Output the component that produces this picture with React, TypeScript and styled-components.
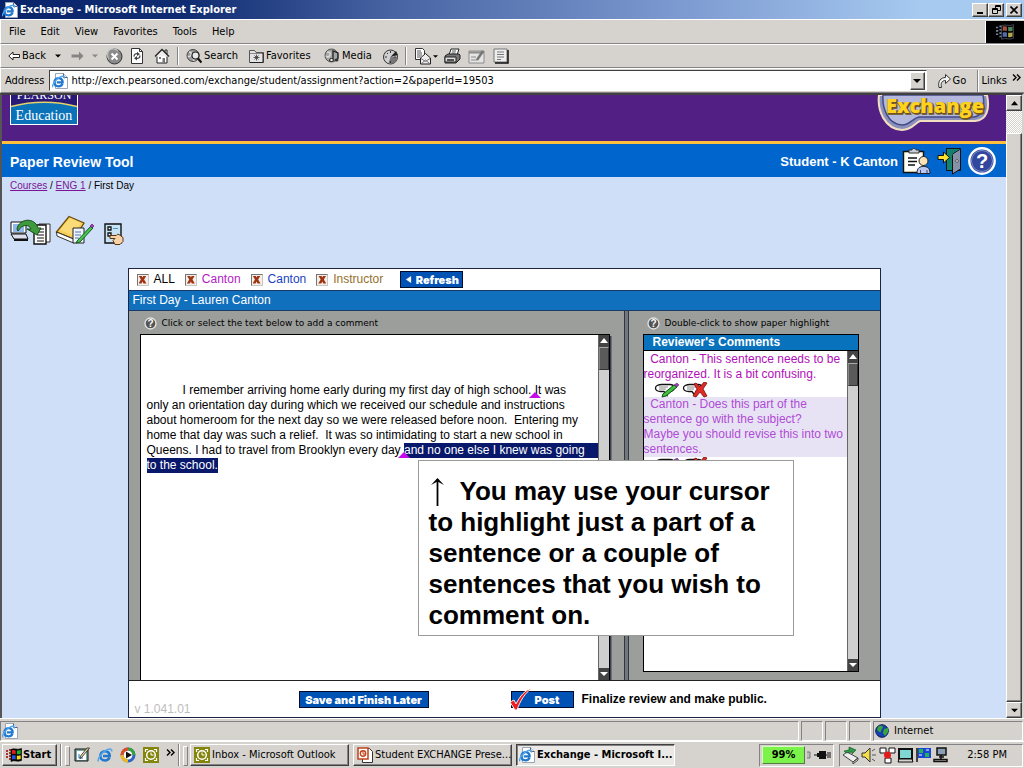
import React from "react";
import styled, { createGlobalStyle, css } from "styled-components";

const ui = `"DejaVu Sans Condensed", "DejaVu Sans", sans-serif`;
const arial = `"Liberation Sans", Arial, sans-serif`;
const face = "#d6d3ce";

const Global = createGlobalStyle`
  * { box-sizing: border-box; }
  body { margin: 0; background: ${face}; font: 11px/14px ${ui}; color: #000; }
  button, input { font: inherit; color: inherit; margin: 0; padding: 0; border: 0; background: none; }
  svg { display: block; flex: none; }
`;

const raised = css`
  background: ${face};
  border: 1px solid;
  border-color: #fff #404040 #404040 #fff;
  box-shadow: inset -1px -1px #848284;
`;
const sunken = css`
  border: 1px solid;
  border-color: #848284 #fff #fff #848284;
`;

const Desktop = styled.div`
  display: flex;
  flex-direction: column;
  min-height: 100vh;
`;

/* ---------- browser chrome ---------- */
const TitleBar = styled.header`
  display: flex;
  align-items: center;
  height: 19px;
  padding: 0 2px;
  gap: 2px;
  background: linear-gradient(90deg, #0a246a 0%, #0f2c72 18%, #4763a2 38%, #7c99d0 66%, #a6caf0 90%);
`;
const WindowTitle = styled.h1`
  flex: 1;
  margin: 0;
  font: bold 11px/18px ${ui};
  color: #fff;
`;
const WindowButtons = styled.div`
  display: flex;
`;
const WindowButton = styled.button<{ $apart?: boolean }>`
  ${raised}
  display: grid;
  place-items: center;
  width: 16px;
  height: 14px;
  margin-left: ${(p) => (p.$apart ? "2px" : "0")};
`;
const Bar = styled.div<{ $h: number }>`
  display: flex;
  align-items: center;
  height: ${(p) => p.$h}px;
  border-top: 1px solid #fff;
  border-bottom: 1px solid #848284;
  border-left: 1px solid #fff;
`;
const MenuBar = styled(Bar).attrs({ as: "nav" })`
  padding-left: 8px;
`;
const MenuItems = styled.div`
  flex: 1;
  display: flex;
  gap: 15px;
`;
const Throbber = styled.div`
  display: grid;
  place-items: center;
  width: 39px;
  height: 22px;
  background: #000;
  border-left: 1px solid #fff;
`;
const Tools = styled(Bar)`
  padding-left: 7px;
`;
const ToolButton = styled.button<{ $w: number }>`
  display: flex;
  align-items: center;
  gap: 2px;
  width: ${(p) => p.$w}px;
  height: 20px;
  white-space: nowrap;
`;
const Divider = styled.span`
  width: 2px;
  height: 18px;
  margin-right: 7px;
  border-left: 1px solid #848284;
  border-right: 1px solid #fff;
`;
const AddressBar = styled(Bar)`
  padding: 0 3px 0 4px;
  gap: 5px;
`;
const AddressField = styled.div`
  flex: 1;
  display: flex;
  align-items: center;
  height: 21px;
  padding: 0 1px 0 2px;
  gap: 3px;
  background: #fff;
  border: 1px solid;
  border-color: #404040 #fff #fff #404040;
`;
const AddressInput = styled.input`
  flex: 1;
  min-width: 0;
  outline: 0;
`;
const DropButton = styled.button`
  ${raised}
  display: grid;
  place-items: center;
  width: 15px;
  height: 18px;
`;
const GoButton = styled.button`
  display: flex;
  align-items: center;
  gap: 2px;
  width: 40px;
  padding-left: 6px;
`;
const LinksButton = styled.button`
  display: flex;
  height: 22px;
  align-items: center;
  gap: 5px;
  padding-left: 4px;
  border-left: 1px solid #848284;
  box-shadow: inset 1px 0 #fff;
`;

/* ---------- page ---------- */
const Viewport = styled.div`
  flex: 1;
  display: flex;
  border-top: 2px solid #404040;
  border-left: 2px solid #555;
  border-right: 2px solid ${face};
`;
const Page = styled.main`
  flex: 1;
  min-width: 0;
  display: flex;
  flex-direction: column;
  background: #cedff7;
`;
const Banner = styled.div`
  display: flex;
  justify-content: space-between;
  align-items: flex-start;
  height: 49px;
  padding: 0 16px 0 8px;
  background: #521f84;
  border-bottom: 3px solid #fdbf3c;
`;
const ToolHeader = styled.div`
  display: flex;
  align-items: center;
  height: 33px;
  padding: 0 10px 0 8px;
  background: #0066ce;
  color: #fff;
  font: bold 13px/18px ${arial};
`;
const ToolTitle = styled.h2`
  flex: 1;
  margin: 0;
  padding-top: 2px;
  font: bold 14px/18px ${arial};
`;
const UserName = styled.span`
  padding-top: 2px;
`;
const HeaderIcons = styled.div`
  display: flex;
  align-items: center;
  gap: 6px;
  margin-left: 4px;
`;
const IconButton = styled.button`
  display: block;
`;
const Crumbs = styled.nav`
  height: 38px;
  padding: 2px 8px;
  font: 10px/14px ${arial};
  a { color: #7b1694; }
`;
const PaperTools = styled.div`
  display: flex;
  align-items: flex-start;
  gap: 4px;
  height: 53px;
  padding: 0 8px;
`;

/* ---------- review panel ---------- */
const Panel = styled.section`
  position: relative;
  flex: 1;
  display: flex;
  flex-direction: column;
  width: 75%;
  min-width: 720px;
  min-height: 420px;
  margin: 0 auto;
  background: #fff;
  border: 1px solid #1c2440;
  font: 12px/15px ${arial};
`;
const FilterRow = styled.div`
  display: flex;
  align-items: center;
  height: 21px;
  padding-left: 8px;
`;
const FilterLabel = styled.label<{ $c: string }>`
  display: flex;
  align-items: center;
  gap: 5px;
  margin-right: 10px;
  color: ${(p) => p.$c};
`;
const FilterSubmit = styled.div`
  padding-left: 7px;
`;
const Tick = styled.input`
  appearance: none;
  display: grid;
  place-items: center;
  width: 12px;
  height: 12px;
  background: #f3efea;
  border: 1px solid;
  border-color: #77736f #c9c5c0 #c9c5c0 #77736f;
  &:checked::before {
    content: "";
    width: 8px;
    height: 8px;
    background: #a03412;
    clip-path: polygon(0 0, 38% 0, 50% 25%, 62% 0, 100% 0, 70% 50%, 100% 100%, 62% 100%, 50% 75%, 38% 100%, 0 100%, 30% 50%);
  }
`;
const BlueButton = styled.button<{ $w: number }>`
  display: flex;
  align-items: center;
  justify-content: center;
  gap: 4px;
  width: ${(p) => p.$w}px;
  height: 17px;
  background: #0053b5;
  border: 1px solid #000c2c;
  color: #fff;
  font: 900 11px/14px Inter, sans-serif;
`;
const DocTitle = styled.h3`
  height: 21px;
  margin: 0;
  padding: 0 4px;
  background: #1170bd;
  border: solid #1c3a63;
  border-width: 1px 0;
  color: #fff;
  font: 12px/19px ${arial};
`;
const Work = styled.div`
  flex: 1;
  display: flex;
  background: #9c9e9c;
`;
const PaperPane = styled.div`
  flex: 1;
  min-width: 0;
  display: flex;
  flex-direction: column;
  padding: 0 14px 0 11px;
`;
const Splitter = styled.div`
  width: 5px;
  background: #73767a;
  border: solid #2f3644;
  border-width: 0 1px;
`;
const CommentPane = styled.div`
  width: 251px;
  display: flex;
  flex-direction: column;
  padding: 0 21px 8px 14px;
`;
const Hint = styled.p`
  display: flex;
  align-items: center;
  gap: 5px;
  height: 23px;
  margin: 0;
  padding: 1px 0 0 4px;
  font: 9px/12px "DejaVu Sans", sans-serif;
  white-space: nowrap;
`;
const PaperBox = styled.div`
  flex: 1;
  display: flex;
  background: #fff;
  border: 1px solid #000;
  border-bottom: 0;
  box-shadow: 2px 2px #3a4258;
  clip-path: inset(0 -2px 0 0);
`;
const PaperText = styled.div`
  flex: 1;
  min-width: 0;
  padding: 48px 0 0 6px;
  white-space: pre;
`;
const Line = styled.div<{ $indent?: boolean }>`
  display: flex;
  height: 15px;
  padding-left: ${(p) => (p.$indent ? "36px" : "0")};
`;
const Marked = styled.mark<{ $fill?: boolean }>`
  flex: ${(p) => (p.$fill ? 1 : "none")};
  background: #08186b;
  color: #fff;
`;
const Anchor = styled.span`
  position: relative;
  &::after {
    content: "";
    position: absolute;
    left: -6px;
    top: 9px;
    border: 6px solid transparent;
    border-top: 0;
    border-bottom: 6px solid #c60ce8;
  }
`;
const SlimScroll = styled.div`
  display: flex;
  flex-direction: column;
  width: 11px;
  background: #cecfce;
  border-left: 1px solid #666;
`;
const SlimButton = styled.button`
  display: grid;
  place-items: center;
  height: 12px;
  background: #444;
`;
const SlimThumb = styled.div`
  height: 23px;
  background: #5a5a5a;
  border: 1px solid #333;
  border-top-color: #aaa;
  border-left-color: #888;
`;
const Fill = styled.div`
  flex: 1;
`;
const CommentBox = styled.div`
  flex: 1;
  display: flex;
  flex-direction: column;
  background: #fff;
  border: 1px solid #000;
`;
const CommentHead = styled.h4`
  height: 16px;
  margin: 0;
  padding-left: 9px;
  background: #0872bd;
  border-bottom: 1px solid #000;
  color: #fff;
  font: bold 12px/15px ${arial};
`;
const CommentBody = styled.div`
  flex: 1;
  display: flex;
`;
const CommentList = styled.div`
  flex: 1;
  padding-top: 1px;
  white-space: pre;
`;
const Comment = styled.p<{ $active?: boolean }>`
  margin: 0;
  color: ${(p) => (p.$active ? "#b04bd6" : "#b010b8")};
  background: ${(p) => (p.$active ? "#e7e3f5" : "transparent")};
`;
const CommentActions = styled.div`
  display: flex;
  gap: 2px;
  height: 15px;
  padding-left: 10px;
`;
const Footer = styled.footer`
  display: grid;
  grid-template-columns: 170px 212px 71px 1fr;
  height: 37px;
  padding-top: 10px;
  border-top: 1px solid #222;
`;
const Version = styled.span`
  padding: 11px 0 0 6px;
  color: #bdbdbd;
`;
const PostWrap = styled.div`
  position: relative;
  svg { position: absolute; left: -2px; top: -4px; }
  button { padding-left: 10px; }
`;
const Final = styled.strong`
  padding-top: 1px;
`;
const Callout = styled.aside`
  position: absolute;
  left: 289px;
  top: 191px;
  width: 376px;
  padding: 15px 10px 4px;
  background: #fff;
  border: 1px solid #9a9c9a;
  font: bold 26px/31px ${arial};
  white-space: pre;
  p { margin: 0; display: flex; align-items: center; gap: 14px; }
`;

/* ---------- page scroll bar ---------- */
const PageScroll = styled.div`
  display: flex;
  flex-direction: column;
  width: 16px;
  background: repeating-conic-gradient(#fff 0 25%, ${face} 0 50%) 0 0 / 2px 2px;
`;
const ScrollButton = styled.button`
  ${raised}
  display: grid;
  place-items: center;
  width: 16px;
  height: 16px;
`;
const Thumb = styled.div`
  ${raised}
  flex: 1;
  margin-top: 22px;
`;

/* ---------- status and task bars ---------- */
const StatusBar = styled.div`
  display: flex;
  align-items: center;
  gap: 2px;
  height: 23px;
  padding: 1px 1px 0 0;
  border-top: 1px solid #fff;
`;
const Cell = styled.div<{ $w?: number }>`
  ${sunken}
  flex: ${(p) => (p.$w ? "none" : "1")};
  width: ${(p) => (p.$w ? p.$w + "px" : "auto")};
  height: 20px;
  display: flex;
  align-items: center;
  gap: 5px;
  padding-left: 1px;
`;
const TaskBar = styled.div`
  display: flex;
  align-items: center;
  height: 27px;
  padding: 0 1px 0 2px;
  border-top: 1px solid #fff;
`;
const StartButton = styled.button`
  ${raised}
  display: flex;
  align-items: center;
  gap: 1px;
  width: 55px;
  height: 22px;
  padding-left: 3px;
  font-weight: bold;
`;
const Grip = styled.span<{ $ml?: number }>`
  width: 8px;
  height: 22px;
  margin-left: ${(p) => p.$ml || 0}px;
  border-left: 1px solid #848284;
  box-shadow: inset 1px 0 #fff;
  &::after {
    content: "";
    display: block;
    width: 3px;
    height: 18px;
    margin: 2px 0 0 4px;
    border: 1px solid;
    border-color: #fff #848284 #848284 #fff;
  }
`;
const Quick = styled.div`
  display: flex;
  align-items: center;
  gap: 7px;
  width: 110px;
  padding-left: 6px;
`;
const TaskButton = styled.button<{ $active?: boolean }>`
  ${raised}
  display: flex;
  align-items: center;
  gap: 2px;
  width: 159px;
  height: 22px;
  margin-left: 4px;
  padding-left: 3px;
  white-space: nowrap;
  ${(p) =>
    p.$active &&
    css`
      padding-left: 2px;
      font-weight: bold;
      background: #ebe9e6;
      border-color: #404040 #fff #fff #404040;
      box-shadow: inset 1px 1px #848284;
    `}
`;
const TaskLabel = styled.span`
  overflow: hidden;
  text-overflow: clip;
`;
const Tray = styled.div<{ $w: number }>`
  ${sunken}
  display: flex;
  align-items: center;
  gap: 2px;
  width: ${(p) => p.$w}px;
  height: 23px;
  margin-left: 5px;
  padding-left: 2px;
`;
const Battery = styled.div`
  width: 44px;
  height: 18px;
  background: #7bf34a;
  border: 1px solid;
  border-color: #d5ffbf #557a44 #557a44 #d5ffbf;
  font: bold 11px/15px ${ui};
  text-align: center;
`;
const Clock = styled.time`
  flex: 1;
  padding-right: 15px;
  text-align: right;
`;

/* ---------- drawings ---------- */
const Tri = ({ dir = "down", w = 7, color = "#000" }: { dir?: "down" | "up" | "left"; w?: number; color?: string }) => (
  <svg width={w} height={w} viewBox="0 0 8 8" fill={color}>
    <path d={dir === "down" ? "M0 2h8L4 6z" : dir === "up" ? "M0 6h8L4 1z" : "M7 0v8L1 4z"} />
  </svg>
);
const IeE = () => (
  <>
    <path d="M12.5 10.500C11.600 12.500 9.800 13.500 8 13.500c-2.900 0-4.700-2-4.700-4.600S5.200 4.200 8 4.200s4.800 1.900 4.700 4.800H6" fill="none" stroke="#2179cf" strokeWidth="2.600" />
    <path d="M1.500 14.500C0 12 5 5 10 2.800 13 1.400 15.500 1.800 14.500 4.500" fill="none" stroke="#4fa6ee" strokeWidth="1.500" />
  </>
);
const IePage = () => (
  <svg width="16" height="16" viewBox="0 0 16 16">
    <path d="M3.500.5h8l4 4v11h-12z" fill="#fff" stroke="#9aa5b8" />
    <path d="M11.500.5v4h4" fill="#dde4ee" stroke="#59637a" />
    <g transform="translate(-.5 1.500) scale(.88)"><IeE /></g>
  </svg>
);
const IeIcon = () => <svg width="16" height="16" viewBox="0 0 16 16"><IeE /></svg>;
const Flag = ({ s = 16, glow = false }: { s?: number; glow?: boolean }) => (
  <svg width={s} height={s} viewBox="0 0 16 16">
    <path d="M0 4h2M0 7h2M0 10h2M3 3h2M3 6h2M3 9h2M3 12h2" stroke={glow ? "#76839c" : "#900"} strokeWidth="1.400" />
    <path d="M5 2.500c3-2 6 1 10.500-1v12c-4 2-7-1-10.500 1z" fill="#000" stroke={glow ? "#667" : "#000"} strokeWidth=".6" />
    <path d="M6 3.400c1.300-.7 2.500-.4 3.700 0v3.800c-1.200-.4-2.400-.6-3.700 0z" fill={glow ? "#a0503c" : "#e02020"} />
    <path d="M10.800 3.400c1.300.3 2.600.2 3.900-.3v3.800c-1.300.5-2.600.6-3.900.3z" fill={glow ? "#4c8658" : "#18b030"} />
    <path d="M6 8.600c1.300-.6 2.500-.4 3.700 0v3.900c-1.200-.4-2.400-.5-3.700 0z" fill={glow ? "#4d6fb0" : "#2050e0"} />
    <path d="M10.800 8.600c1.300.3 2.600.2 3.900-.3v3.800c-1.300.5-2.600.6-3.900.3z" fill={glow ? "#b5a64a" : "#f0d820"} />
  </svg>
);
const BackArrow = () => (
  <svg width="12" height="10" viewBox="0 0 12 10"><path d="M.8 5 5 1v2.500h6.500v3H5V9z" fill="#fff" stroke="#222" /></svg>
);
const ForwardArrow = () => (
  <svg width="13" height="10" viewBox="0 0 13 10"><path d="M12.500 5 8 .5V3.500H.5v3H8v3z" fill="#858585" /></svg>
);
const StopIcon = () => (
  <svg width="17" height="17" viewBox="0 0 17 17">
    <circle cx="8.500" cy="8.500" r="7.500" fill="#8a8a8a" stroke="#333" />
    <path d="M3 11A6 6 0 0 1 12 3" fill="none" stroke="#bbb" strokeWidth="1.500" />
    <path d="m5.500 5.500 6 6m0-6-6 6" stroke="#fff" strokeWidth="2" />
  </svg>
);
const RefreshIcon = () => (
  <svg width="14" height="16" viewBox="0 0 14 16">
    <path d="M1.500.5h8l3 3v12h-11z" fill="#fff" stroke="#333" />
    <path d="M9.500.5v3h3" fill="none" stroke="#333" />
    <path d="M4 8.500C4 6 6 5 8 6M10 7.500c0 2.500-2 3.500-4 2.500" fill="none" stroke="#444" strokeWidth="1.300" />
    <path d="m7 3.800 3 2.400-3 1.800zM7 8l-3 2.200L7 12.500z" fill="#444" />
  </svg>
);
const HomeIcon = () => (
  <svg width="16" height="16" viewBox="0 0 16 16">
    <path d="M11 2h2v4h-2z" fill="#fff" stroke="#222" />
    <path d="M3 8v7h10V8" fill="#fff" stroke="#222" />
    <path d="M1 8.500 8 1.500l7 7" fill="#eee" stroke="#222" strokeWidth="1.300" />
    <path d="M8.500 10h2.500v5H8.500z" fill="#777" /><path d="M5 9h2v2H5z" fill="#777" />
  </svg>
);
const SearchIcon = () => (
  <svg width="16" height="16" viewBox="0 0 16 16">
    <circle cx="7" cy="7.500" r="6" fill="#999" stroke="#444" />
    <path d="M3 4c2 0 3 1 2 3s-2 2-3 1M6 11c1-1 2 0 2 2" stroke="#ddd" strokeWidth="1.500" fill="none" />
    <circle cx="9.500" cy="7.500" r="3.500" fill="#e9e9e9" stroke="#222" strokeWidth="1.200" />
    <path d="m12 10.500 3.500 4" stroke="#111" strokeWidth="2.200" />
  </svg>
);
const FavIcon = () => (
  <svg width="15" height="14" viewBox="0 0 15 14">
    <path d="M.5 13.500v-12h5l1.500 2h7.500v10z" fill="#e4e4e4" stroke="#555" />
    <path d="M1 4.500h13" stroke="#888" /><path d="M14 4v9.500H1" stroke="#222" fill="none" />
    <path d="M7.500 5.500v6M4.500 8.500h6M5.500 6.500l4 4M9.500 6.500l-4 4" stroke="#333" strokeWidth=".8" />
  </svg>
);
const MediaIcon = () => (
  <svg width="16" height="16" viewBox="0 0 16 16">
    <circle cx="7.500" cy="7.500" r="6.500" fill="#a5a5a5" stroke="#555" />
    <path d="M3 4c2 0 4 0 3 3s-3 2-4 1" stroke="#ddd" strokeWidth="1.500" fill="none" />
    <path d="M9 11.500V3l5 2v6" fill="none" stroke="#222" strokeWidth="1.300" />
    <ellipse cx="7.500" cy="12" rx="2" ry="1.500" fill="#eee" stroke="#222" /><ellipse cx="12.500" cy="12" rx="2" ry="1.500" fill="#333" />
  </svg>
);
const HistoryIcon = () => (
  <svg width="17" height="17" viewBox="0 0 17 17">
    <circle cx="8.500" cy="9" r="7" fill="#d0d0d0" stroke="#333" />
    <path d="M8.500 9 14 3l2 4z" fill="#222" /><path d="M8.500 9h7a7 7 0 0 1-9 6.500z" fill="#777" />
    <path d="M8.500 3v2M3 9h2M8.500 13v2M12 9h2M5 5l1 1" stroke="#333" />
  </svg>
);
const MailIcon = () => (
  <svg width="17" height="17" viewBox="0 0 17 17">
    <path d="M1.500.5h7l2 2v9h-9z" fill="#fff" stroke="#333" /><path d="M3 3h4M3 5h5M3 7h5M3 9h4" stroke="#555" />
    <path d="m6.500 10 5-4.500 5 4.500v6h-10z" fill="#eee" stroke="#222" /><path d="m7 16 4.500-4 4.500 4M7 10.500l4.500 3 4.500-3" fill="none" stroke="#777" />
  </svg>
);
const PrintIcon = () => (
  <svg width="17" height="16" viewBox="0 0 17 16">
    <path d="m5 7 2-6h8l-2 6z" fill="#fff" stroke="#222" /><path d="M8 3h4M7.500 5h4" stroke="#555" />
    <path d="m1 8 3-2h11l1 1v4l-4 4H1z" fill="#777" stroke="#222" /><path d="M1 9h11v5H1z" fill="#ddd" stroke="#222" /><path d="M3 12h7" stroke="#222" strokeWidth="1.500" />
  </svg>
);
const EditIcon = () => (
  <svg width="17" height="15" viewBox="0 0 17 15">
    <path d="M1 2h15v12H1z" fill="#e5e5e5" stroke="#8b8b8b" /><path d="M1 3.500h15" stroke="#8b8b8b" strokeWidth="2" />
    <path d="M3 8h5M3 11h6" stroke="#8b8b8b" /><path d="m9 11 6-9" stroke="#777" strokeWidth="2.500" />
  </svg>
);
const DiscussIcon = () => (
  <svg width="16" height="16" viewBox="0 0 16 16">
    <path d="M1 1h13v13H1z" fill="#eee" stroke="#777" /><path d="M15 2v13H2" fill="none" stroke="#111" strokeWidth="1.500" />
    <path d="M4 4h7M4 6.500h7M4 9h7M4 11.500h4" stroke="#777" />
  </svg>
);
const GoIcon = () => (
  <svg width="13" height="16" viewBox="0 0 13 16">
    <path d="M1 14.500C-.5 8 3 4.500 7.500 4.500V1.500l5 4.500-5 4.500v-3C4 7.500 2.500 10 3.500 14.500z" fill="#f4f4f4" stroke="#333" />
  </svg>
);
const Chevrons = () => (
  <svg width="9" height="13" viewBox="0 0 9 13" fill="none" stroke="#000" strokeWidth="1.400"><path d="m1 .5 3 3-3 3M5 .5l3 3-3 3" /></svg>
);
const PearsonLogo = () => (
  <svg width="68" height="30" viewBox="0 0 68 30">
    <path d="M0 0h68v30H0z" fill="#fff" /><path d="M1 0h66v29H1z" fill="#2a1a78" />
    <path d="M1 12Q34 3 67 12V29H1z" fill="#0a72b8" /><path d="M1 11.500Q34 3 67 11.500" fill="none" stroke="#e3d36a" strokeWidth="1.300" />
    <text x="34" y="4" textAnchor="middle" fill="#fff" fontFamily="Liberation Serif, serif" fontSize="12">PEARSON</text>
    <text x="34" y="25" textAnchor="middle" fill="#fff" fontFamily="Liberation Serif, serif" fontSize="14">Education</text>
  </svg>
);
const ExchangeLogo = () => (
  <svg width="113" height="38" viewBox="0 0 113 38">
    <path d="M2 0C0 16 8 34 25 35c10 0 13-7 18-9h55c12-1 15-12 12-26z" fill="#8b91bd" stroke="#f1dfc0" strokeWidth="2" />
    <path d="M6 0C5 14 11 29 25 30c8 0 11-7 17-8h55c9-1 11-11 9-22z" fill="#b3b8dc" stroke="#444a86" strokeWidth="1.500" />
    <text x="59" y="19" textAnchor="middle" fill="#6d5320" stroke="#6d5320" strokeWidth="1.500" fontFamily="Open Sans, sans-serif" fontWeight="800" fontSize="20">Exchange</text>
    <text x="58" y="18" textAnchor="middle" fill="#ffd21e" fontFamily="Open Sans, sans-serif" fontWeight="800" fontSize="20">Exchange</text>
  </svg>
);
const ClipboardIcon = () => (
  <svg width="29" height="28" viewBox="0 0 29 28">
    <path d="M1.500 4.500h20v21h-20z" fill="#fffbd8" stroke="#111" strokeWidth="1.400" /><path d="M3.500 6.500h16v17h-16z" fill="#fff" />
    <path d="M7 6V3h3c0-2 4-2 4 0h3v3z" fill="#c9cfdd" stroke="#333" /><path d="M6 11h9M6 14.500h9M6 18h7" stroke="#111" strokeWidth="1.500" />
    <circle cx="21.500" cy="14" r="4.500" fill="#fbe2b8" stroke="#222" /><path d="M15 26.500c0-6 3-7 6.500-7s6.500 1 6.500 7z" fill="#b9c8f0" stroke="#223" /><path d="M18.500 26v-3M25 26v-3" stroke="#446" />
  </svg>
);
const DoorIcon = () => (
  <svg width="25" height="28" viewBox="0 0 25 28">
    <path d="M9.500 1.500h14v22h-14z" fill="#178573" stroke="#111" /><path d="m15.500 7 8-5v20l-8 5z" fill="#8792a8" stroke="#111" /><path d="M11 2h12l-7 4-5 17z" fill="#13806e" />
    <circle cx="20" cy="14" r="1.300" fill="#fff" stroke="#111" strokeWidth=".6" /><path d="M1 8.500h5.500V5l6 5.500-6 5.500v-3.500H1z" fill="#ffe22e" stroke="#111" />
  </svg>
);
const HelpIcon = () => (
  <svg width="28" height="28" viewBox="0 0 28 28">
    <circle cx="14" cy="14" r="12.700" fill="#31469c" stroke="#fff" strokeWidth="2.400" /><circle cx="14" cy="14" r="10.500" fill="none" stroke="#7b8ccc" />
    <text x="14" y="21" textAnchor="middle" fill="#fff" fontFamily="Liberation Sans, sans-serif" fontWeight="bold" fontSize="20">?</text>
  </svg>
);
const ConvertIcon = () => (
  <svg width="41" height="32" viewBox="0 0 41 32">
    <path d="M1 7h15v11H1z" fill="#fff" stroke="#111" /><path d="M3 9h11v8H3z" fill="#8fb8ec" /><path d="m1 19 3 5h14l-2-5z" fill="#dde" stroke="#111" /><path d="M4 25h14" stroke="#111" strokeWidth="2" />
    <path d="M29 9h11v18H29z" fill="#fff" stroke="#333" /><path d="M24 10h12v19H24z" fill="#fff" stroke="#111" strokeWidth="1.400" />
    <path d="M27 14h7M27 17h7M27 20h7M27 23h7M27 26h7" stroke="#111" strokeWidth="1.200" />
    <path d="M7 14C9 3 25 2 28 13h3l-4 7-10-6h4c-2-5-9-5-13 2z" fill="#3f9a3d" stroke="#1b4d1c" />
  </svg>
);
const NotesIcon = () => (
  <svg width="40" height="32" viewBox="0 0 40 32">
    <path d="M1.500 17 14 1.500 29 8 19 24z" fill="#f8cf52" stroke="#6b4b0c" strokeWidth="1.300" /><path d="m5 15 10-12 11 5-9 12z" fill="#fbdb78" />
    <path d="m1.500 17 17 7v4L2 21z" fill="#fff" stroke="#333" /><path d="M18 13h11v15H18z" fill="#eef4ff" stroke="#222" /><path d="M20 17h6M20 20h6M20 23h4" stroke="#57a" />
    <path d="M22 26 36 11l2 2-13 14-4 1z" fill="#45c84b" stroke="#195a1c" /><path d="m35 11 2-2 2 2-2 2z" fill="#a33bc0" stroke="#4b1460" strokeWidth=".6" />
  </svg>
);
const PickIcon = () => (
  <svg width="27" height="32" viewBox="-4 -7 27 32">
    <path d="M2 2h16v19H2z" fill="#c6e3f5" stroke="#111" strokeWidth="1.400" /><path d="M5 5h3v3H5zM5 11h3v3H5z" fill="#fff" stroke="#111" strokeWidth="1.300" /><path d="M10 6.500h5" stroke="#5592c0" />
    <path d="M7 13.500h6c1 0 1-2 3-1l4 3v4l-3 3h-5l-2-4 2-2H7z" fill="#f7d2a6" stroke="#5a3510" />
  </svg>
);
const SmallHelp = () => (
  <svg width="13" height="13" viewBox="0 0 13 13">
    <circle cx="6.500" cy="6.500" r="5.500" fill="#555" stroke="#e6e6e6" strokeWidth="1.300" />
    <text x="6.500" y="10" textAnchor="middle" fill="#fff" fontFamily="Liberation Sans, sans-serif" fontWeight="bold" fontSize="10">?</text>
  </svg>
);
const Bubble = () => <path d="M8 2.500h8c3 0 4 1.500 4 3.500s-2 3.500-4 3.500h-2l-1 4-3-4H7C3 9.500 1.500 8 1.500 6S4 2.500 8 2.500z" fill="#fff" stroke="#111" strokeWidth="1.300" />;
const EditComment = () => (
  <svg width="26" height="16" viewBox="0 0 26 16"><Bubble /><path d="M5 5h9M5 7h7" stroke="#888" />
    <path d="m9 12 11-9 3 2-11 9-4 1z" fill="#3fc23f" stroke="#12501a" /><path d="m20 3 3-2 2 2-2 2z" fill="#a33bc0" stroke="#333" strokeWidth=".5" /></svg>
);
const DeleteComment = () => (
  <svg width="26" height="16" viewBox="0 0 26 16"><Bubble /><path d="M5 5h9M5 7h7" stroke="#888" />
    <path d="m14 1 4 4 4-5 3 1-4 6 4 7-3 1-4-5-4 5-3-1 4-7-3-5z" fill="#e02a24" stroke="#7d0f0c" strokeWidth=".8" /></svg>
);
const CheckMark = () => (
  <svg width="24" height="24" viewBox="0 0 24 24"><path d="m1 15 4-2 2 4C11 9 16 3 23 1 16 6 11 14 8 23H6z" fill="#ee1c1c" stroke="#fff" strokeWidth=".9" /></svg>
);
const ShowDesktop = () => (
  <svg width="16" height="16" viewBox="0 0 16 16"><path d="M1 2h13v12H1z" fill="#79a8a0" stroke="#111" /><path d="M3 4h9v9H3z" fill="#fff" /><path d="M15.500 1 8 10l-2 2 .5-3L13 1z" fill="#f0d69a" stroke="#222" strokeWidth=".8" /><path d="M5 7v4h4" stroke="#26a" fill="none" /></svg>
);
const PlayerIcon = () => (
  <svg width="16" height="16" viewBox="0 0 16 16" fill="none" strokeWidth="3"><circle cx="8" cy="8" r="6" fill="#fff" stroke="#2f66c4" /><path d="M8 2a6 6 0 0 0-6 6" stroke="#e24b20" /><path d="M8 2a6 6 0 0 1 6 6" stroke="#39a03a" /><path d="M2 8a6 6 0 0 0 6 6" stroke="#f2b818" /><path d="m6 4.500 6 3.500-6 3.500z" fill="#111" /></svg>
);
const OutlookIcon = () => (
  <svg width="16" height="16" viewBox="0 0 16 16"><path d="M0 0h16v16H0z" fill="#84860c" /><path d="M2.500 5V2.500H5M11 2.500h2.500V5M13.500 11v2.500H11M5 13.500H2.500V11" fill="none" stroke="#fff" strokeWidth="1.200" /><circle cx="8" cy="8" r="4.300" fill="none" stroke="#fff" strokeWidth="1.500" /><path d="M8 5.500V8h2.500" stroke="#fff" fill="none" /></svg>
);
const PptIcon = () => (
  <svg width="16" height="16" viewBox="0 0 16 16"><path d="M5.500 1.500h7l3 3v11h-10z" fill="#fff" stroke="#333" /><path d="M1 1h10v11H1z" fill="#fff" stroke="#c0441c" strokeWidth="1.500" /><circle cx="6" cy="6.500" r="2.700" fill="none" stroke="#c0441c" strokeWidth="1.400" /><path d="M6 4v3h3" stroke="#c0441c" fill="none" /></svg>
);
const Globe = () => (
  <svg width="14" height="14" viewBox="0 0 14 14"><circle cx="7" cy="7" r="6.300" fill="#1740b0" stroke="#0a1c50" /><path d="M3 3c2-2 5-1 5 0S6 5 6 7 4 8 2 6zM9 5l4-1v4l-3 4-2-3z" fill="#38a83c" /></svg>
);
const PlugIcon = () => (
  <svg width="26" height="16" viewBox="0 0 26 16"><path d="M-1 5h4v6h-4z" fill="#bbb" stroke="#777" /><path d="M7 8h4M19 8h5M20 6h4M20 10h4" stroke="#111" strokeWidth="1.200" /><path d="M10 6h2V4h7v8h-7v-2h-2z" fill="#111" /></svg>
);
const TrayIcons = () => (
  <svg width="108" height="18" viewBox="0 0 108 18">
    <path d="m1 9 4-3 11 6-5 4zM11 16l5-4v2l-5 4z" fill="#eee" stroke="#444" /><path d="m2 5 5-1V1l7 3-4 4V6L4 7z" fill="#2b9b45" stroke="#124c20" strokeWidth=".6" />
    <path d="M20 7h3l5-5v14l-5-5h-3z" fill="#f4df4a" stroke="#333" /><path d="m30 5 3-2M30 9h4M30 13l3 2" stroke="#555" />
    <path d="M38 2h6v5h-6zM47 2h6v5h-6zM43 12h6v5h-6z" fill="#fff" stroke="#111" /><circle cx="45.500" cy="9" r="3.500" fill="#e41b1b" />
    <path d="M56 2h15v14H56z" fill="#111" /><path d="M58 4h11v8H58z" fill="#7fd8d4" /><path d="M57 13h13l1 3H56z" fill="#d6d3ce" stroke="#111" />
    <path d="M75 2v14" stroke="#111" strokeWidth="1.500" /><path d="M76 2h13v10H76z" fill="#1746d2" /><path d="M77 3h4v4h-4zM83 7h4v4h-4z" fill="#23b25a" /><path d="M77 9h3M84 4h3" stroke="#fff" />
    <path d="M95 2h9v7h-9z" fill="#8b9eb5" stroke="#111" strokeWidth="1.500" /><path d="M97 11h5M92 13.500h13v2H92zM99 9v4" stroke="#111" strokeWidth="1.500" fill="none" />
  </svg>
);
const UpArrow = () => (
  <svg width="17" height="31" viewBox="0 0 17 31"><path d="M8.500 3v27" stroke="#000" strokeWidth="1.800" /><path d="m2 9 6.500-7L15 9l-6.500-3.500z" fill="#000" /></svg>
);

const filters = [
  { name: "ALL", color: "#000" },
  { name: "Canton", color: "#b21cc4" },
  { name: "Canton", color: "#1c3fc0" },
  { name: "Instructor", color: "#96702c" },
];

const ArrowScroll = () => (
  <SlimScroll>
    <SlimButton aria-label="Scroll up"><Tri dir="up" w={8} color="#fff" /></SlimButton>
    <SlimThumb />
    <Fill />
    <SlimButton aria-label="Scroll down"><Tri w={8} color="#fff" /></SlimButton>
  </SlimScroll>
);
const Actions = () => (
  <CommentActions>
    <IconButton aria-label="Edit comment"><EditComment /></IconButton>
    <IconButton aria-label="Delete comment"><DeleteComment /></IconButton>
  </CommentActions>
);

export default function App() {
  return (
    <Desktop>
      <Global />
      <TitleBar>
        <IePage />
        <WindowTitle>Exchange - Microsoft Internet Explorer</WindowTitle>
        <WindowButtons>
          <WindowButton aria-label="Minimize"><svg width="8" height="8"><path d="M1 6h6v2H1z" /></svg></WindowButton>
          <WindowButton aria-label="Restore"><svg width="9" height="9" fill="none" stroke="#000"><path d="M3.500 3V.5h5v5H6M3 1.500h6M.5 3.500h5v5h-5zM0 4.500h6" /></svg></WindowButton>
          <WindowButton aria-label="Close" $apart><svg width="8" height="8"><path d="m.5.5 7 7m0-7-7 7" stroke="#000" strokeWidth="1.600" /></svg></WindowButton>
        </WindowButtons>
      </TitleBar>
      <MenuBar $h={25}>
        <MenuItems>
          {["File", "Edit", "View", "Favorites", "Tools", "Help"].map((m) => <button key={m}>{m}</button>)}
        </MenuItems>
        <Throbber><Flag glow s={18} /></Throbber>
      </MenuBar>
      <Tools $h={24}>
        <ToolButton $w={47}><BackArrow />Back</ToolButton>
        <ToolButton $w={16} aria-label="Back list"><Tri w={6} /></ToolButton>
        <ToolButton $w={21} aria-label="Forward"><ForwardArrow /></ToolButton>
        <ToolButton $w={14} aria-label="Forward list"><Tri w={6} color="#888" /></ToolButton>
        <ToolButton $w={24} aria-label="Stop"><StopIcon /></ToolButton>
        <ToolButton $w={24} aria-label="Refresh page"><RefreshIcon /></ToolButton>
        <ToolButton $w={23} aria-label="Home"><HomeIcon /></ToolButton>
        <Divider />
        <ToolButton $w={63}><SearchIcon />Search</ToolButton>
        <ToolButton $w={75}><FavIcon />Favorites</ToolButton>
        <ToolButton $w={58}><MediaIcon />Media</ToolButton>
        <ToolButton $w={23} aria-label="History"><HistoryIcon /></ToolButton>
        <Divider />
        <ToolButton $w={30} aria-label="Mail"><MailIcon /><Tri w={5} /></ToolButton>
        <ToolButton $w={24} aria-label="Print"><PrintIcon /></ToolButton>
        <ToolButton $w={25} aria-label="Edit"><EditIcon /></ToolButton>
        <ToolButton $w={20} aria-label="Discuss"><DiscussIcon /></ToolButton>
      </Tools>
      <AddressBar $h={25}>
        <label htmlFor="address">Address</label>
        <AddressField>
          <IePage />
          <AddressInput id="address" defaultValue="http://exch.pearsoned.com/exchange/student/assignment?action=2&paperId=19503" />
          <DropButton aria-label="Address list"><Tri w={8} /></DropButton>
        </AddressField>
        <GoButton><GoIcon />Go</GoButton>
        <LinksButton>Links <Chevrons /></LinksButton>
      </AddressBar>

      <Viewport>
        <Page>
          <Banner><PearsonLogo /><ExchangeLogo /></Banner>
          <ToolHeader>
            <ToolTitle>Paper Review Tool</ToolTitle>
            <UserName>Student - K Canton</UserName>
            <HeaderIcons>
              <IconButton aria-label="Roster"><ClipboardIcon /></IconButton>
              <IconButton aria-label="Exit"><DoorIcon /></IconButton>
              <IconButton aria-label="Help"><HelpIcon /></IconButton>
            </HeaderIcons>
          </ToolHeader>
          <Crumbs><a href="#courses">Courses</a> / <a href="#eng1">ENG 1</a> / First Day</Crumbs>
          <PaperTools>
            <IconButton aria-label="Download paper"><ConvertIcon /></IconButton>
            <IconButton aria-label="Notes"><NotesIcon /></IconButton>
            <IconButton aria-label="Options"><PickIcon /></IconButton>
          </PaperTools>
          <Panel>
            <FilterRow>
              {filters.map((f, i) => (
                <FilterLabel key={i} $c={f.color}><Tick type="checkbox" defaultChecked />{f.name}</FilterLabel>
              ))}
              <FilterSubmit><BlueButton $w={63}><Tri dir="left" w={7} color="#fff" />Refresh</BlueButton></FilterSubmit>
            </FilterRow>
            <DocTitle>First Day - Lauren Canton</DocTitle>
            <Work>
              <PaperPane>
                <Hint><SmallHelp />Click or select the text below to add a comment</Hint>
                <PaperBox>
                  <PaperText>
                    <Line $indent>I remember arriving home early during my first day of high school. <Anchor />It was</Line>
                    <Line>only an orientation day during which we received our schedule and instructions</Line>
                    <Line>about homeroom for the next day so we were released before noon.  Entering my</Line>
                    <Line>home that day was such a relief.  It was so intimidating to start a new school in</Line>
                    <Line>Queens. I had to travel from Brooklyn every day <Anchor /><Marked $fill>and no one else I knew was going</Marked></Line>
                    <Line><Marked>to the school.</Marked></Line>
                  </PaperText>
                  <ArrowScroll />
                </PaperBox>
              </PaperPane>
              <Splitter />
              <CommentPane>
                <Hint><SmallHelp />Double-click to show paper highlight</Hint>
                <CommentBox>
                  <CommentHead>Reviewer's Comments</CommentHead>
                  <CommentBody>
                    <CommentList>
                      <Comment>{"  Canton - This sentence needs to be\nreorganized. It is a bit confusing."}</Comment>
                      <Actions />
                      <Comment $active>{"  Canton - Does this part of the\nsentence go with the subject?\nMaybe you should revise this into two\nsentences."}</Comment>
                      <Actions />
                    </CommentList>
                    <ArrowScroll />
                  </CommentBody>
                </CommentBox>
              </CommentPane>
            </Work>
            <Footer>
              <Version>v 1.041.01</Version>
              <BlueButton $w={130}>Save and Finish Later</BlueButton>
              <PostWrap><BlueButton $w={63}>Post</BlueButton><CheckMark /></PostWrap>
              <Final>Finalize review and make public.</Final>
            </Footer>
            <Callout>
              <p><UpArrow />You may use your cursor</p>
              <p>to highlight just a part of a</p>
              <p>sentence or a couple of</p>
              <p>sentences that you wish to</p>
              <p>comment on.</p>
            </Callout>
          </Panel>
        </Page>
        <PageScroll>
          <ScrollButton aria-label="Page up"><Tri dir="up" /></ScrollButton>
          <Thumb />
          <ScrollButton aria-label="Page down"><Tri /></ScrollButton>
        </PageScroll>
      </Viewport>

      <StatusBar>
        <Cell><IePage /></Cell>
        <Cell $w={22} />
        <Cell $w={22} />
        <Cell $w={22} />
        <Cell $w={150}><Globe />Internet</Cell>
      </StatusBar>
      <TaskBar>
        <StartButton><Flag />Start</StartButton>
        <Grip $ml={3} />
        <Quick>
          <ShowDesktop /><IeIcon /><PlayerIcon /><OutlookIcon /><Chevrons />
        </Quick>
        <Grip />
        <TaskButton><OutlookIcon /><TaskLabel>Inbox - Microsoft Outlook</TaskLabel></TaskButton>
        <TaskButton><PptIcon /><TaskLabel>Student EXCHANGE Prese...</TaskLabel></TaskButton>
        <TaskButton $active><IePage /><TaskLabel>Exchange - Microsoft I...</TaskLabel></TaskButton>
        <Fill />
        <Tray $w={75}><Battery>99%</Battery><PlugIcon /></Tray>
        <Tray $w={184}><TrayIcons /><Clock>2:58 PM</Clock></Tray>
      </TaskBar>
    </Desktop>
  );
}
